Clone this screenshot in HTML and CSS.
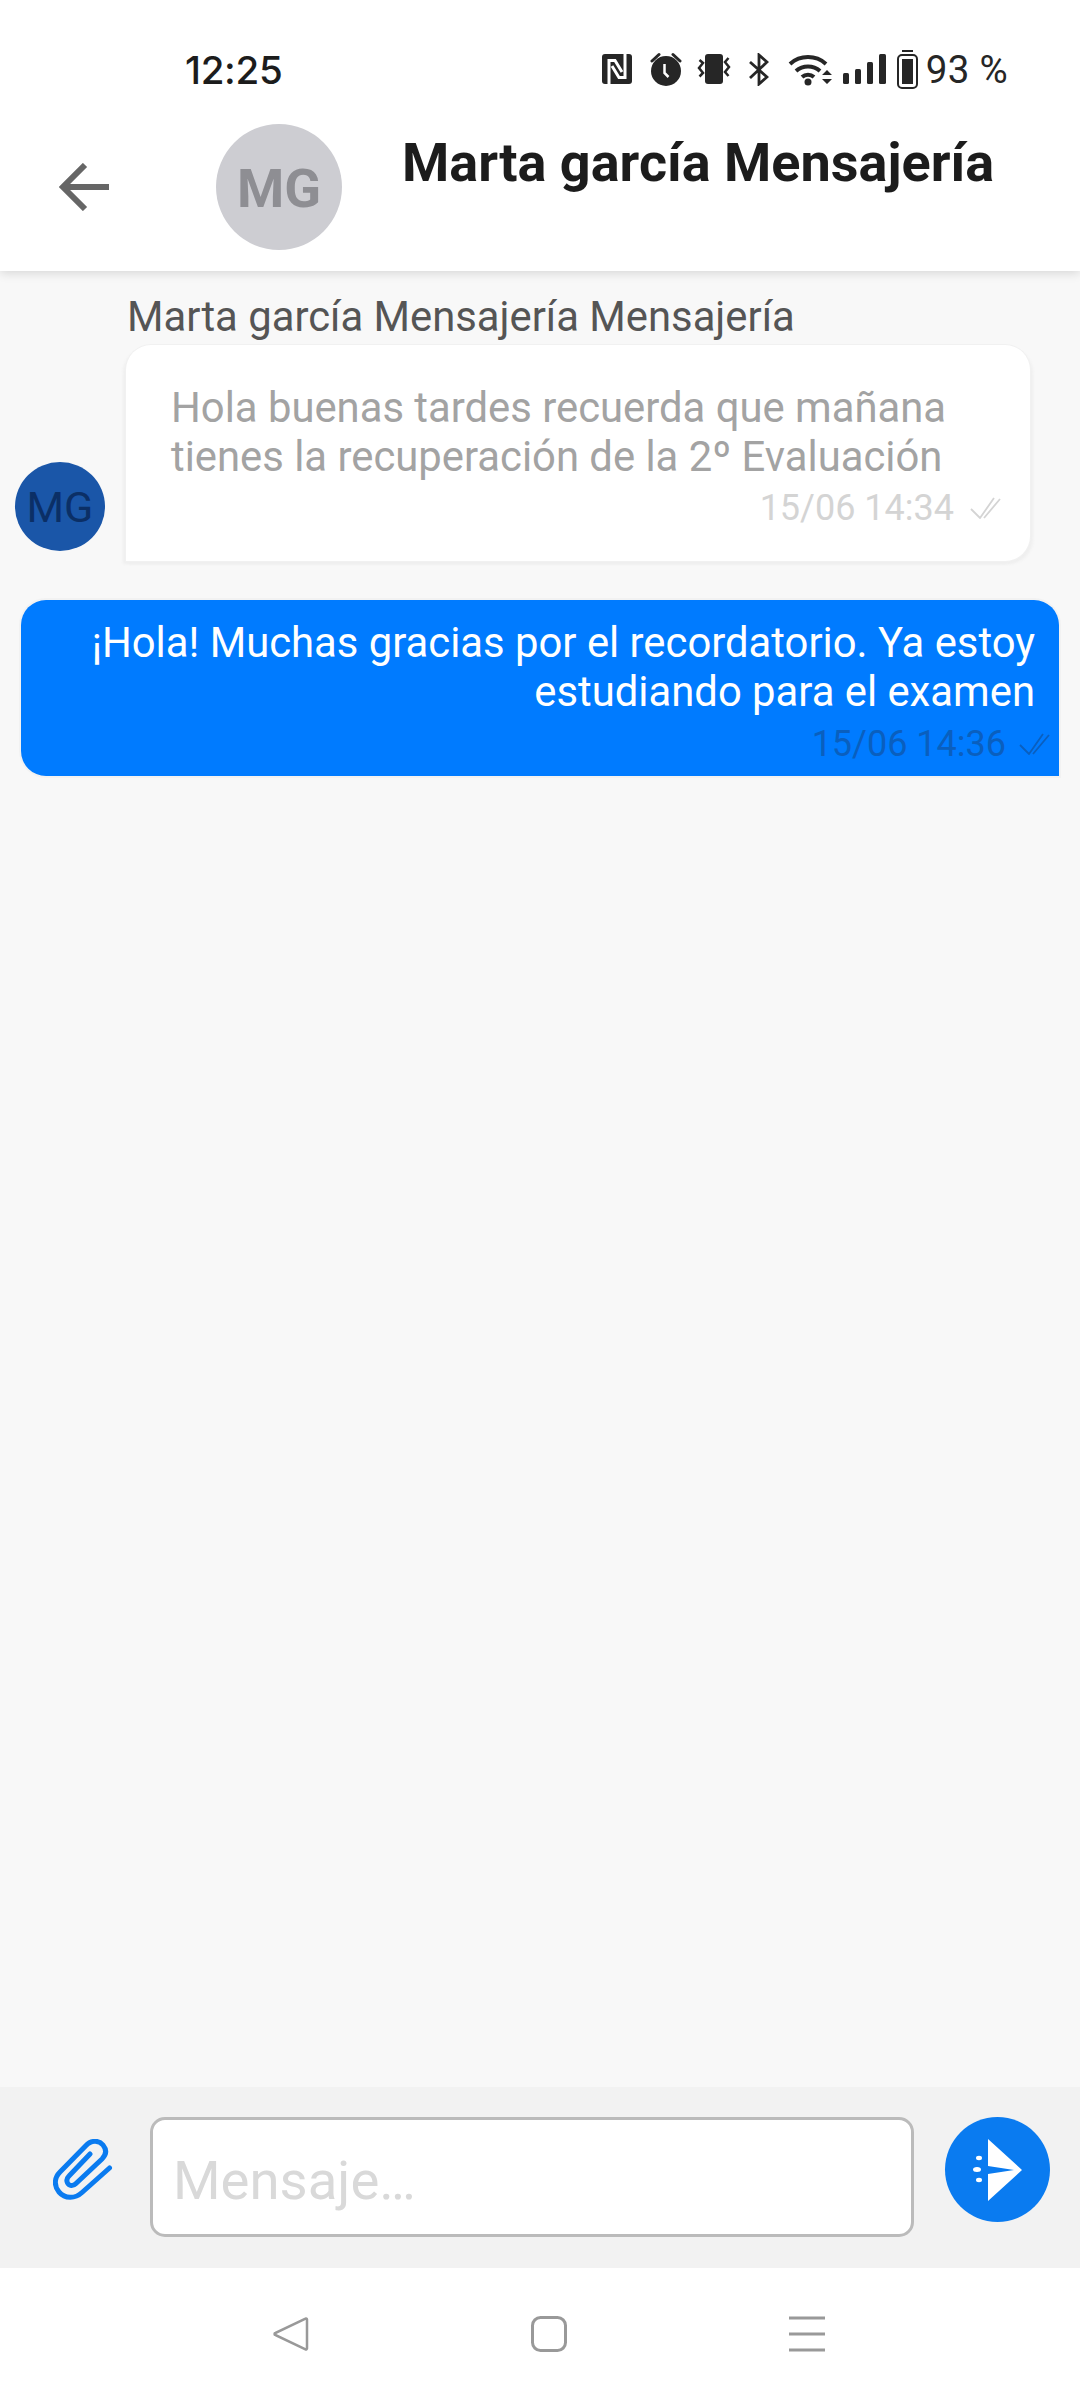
FILE: index.html
```html
<!DOCTYPE html>
<html lang="es">
<head>
<meta charset="utf-8">
<title>Mensajería</title>
<link rel="stylesheet" href="styles.css">
</head>
<body>
<div class="app">
  <header class="top">
    <div class="status">
      <span class="time">12:25</span>
      <div class="status-icons">
        <svg class="si" width="30" height="30" viewBox="0 0 30 30"><rect width="30" height="30" rx="3" fill="#262626"/><path d="M7 30V6.500h6L20 18M23 0v23.500h-6L10 12" fill="none" stroke="#fff" stroke-width="3"/></svg>
        <svg class="si si-alarm" width="32" height="34" viewBox="0 0 32 34"><circle cx="16" cy="19" r="15" fill="#262626"/><path d="M2 9l7-6.500M30 9l-7-6.500" stroke="#262626" stroke-width="3" stroke-linecap="round"/><path d="M14.500 12v9l4 4" fill="none" stroke="#fff" stroke-width="2.500"/></svg>
        <svg class="si si-vib" width="34" height="30" viewBox="0 0 34 30"><rect x="8" y="0" width="18" height="30" rx="3" fill="#262626"/><path d="M2.500 6l3.500 3-4 5 4 5-3.500 3.500M31.500 4l-3.500 4 4 5-4 5 3.500 4" fill="none" stroke="#262626" stroke-width="2.500"/></svg>
        <svg class="si si-bt" width="21" height="33" viewBox="0 0 21 33"><path d="M2 9l17 15-8 7V2l8 7L2 25" fill="none" stroke="#262626" stroke-width="2.800"/></svg>
        <svg class="si si-wifi" width="44" height="33" viewBox="0 0 44 33"><path d="M2 11a27 27 0 0 1 36 0M8 18a18 18 0 0 1 24 0M14 24a9 9 0 0 1 12 0" fill="none" stroke="#262626" stroke-width="4"/><circle cx="20" cy="29" r="3.500" fill="#262626"/><path d="M34 22l5-5 5 5zM34 26h10l-5 5z" fill="#262626"/></svg>
        <svg class="si si-sig" width="43" height="30" viewBox="0 0 43 30"><rect y="19" width="6" height="11" rx="1.500" fill="#262626"/><rect x="12" y="15" width="6" height="15" rx="1.500" fill="#262626"/><rect x="24" y="8" width="6" height="22" rx="1.500" fill="#262626"/><rect x="36" y="0" width="7" height="30" rx="1.500" fill="#262626"/></svg>
        <svg class="si si-bat" width="21" height="39" viewBox="0 0 21 39"><path d="M5 1h11" stroke="#262626" stroke-width="2"/><rect x="1" y="5" width="19" height="33" rx="4" fill="none" stroke="#262626" stroke-width="2"/><rect x="5" y="9" width="11" height="25" fill="#262626"/></svg>
        <span class="pct">93 %</span>
      </div>
    </div>
    <div class="bar">
      <svg class="back" width="50" height="48" viewBox="0 0 50 48"><path d="M50 24H4M26 2L4 24l22 22" fill="none" stroke="#666" stroke-width="6"/></svg>
      <div class="avatar-lg">MG</div>
      <h1 class="title">Marta garcía Mensajería</h1>
    </div>
  </header>

  <main class="chat">
    <div class="incoming">
      <div class="avatar-sm">MG</div>
      <div class="incoming-body">
        <div class="sender">Marta garcía Mensajería Mensajería</div>
        <div class="bubble bubble-in">
          <p class="msg">Hola buenas tardes recuerda que mañana<br>tienes la recuperación de la 2º Evaluación</p>
          <div class="meta meta-in">
            <span>15/06 14:34</span>
            <svg class="tick" width="31" height="22" viewBox="0 0 31 22"><path d="M1 12l9 9L24 1M14 21L30 2" fill="none" stroke="currentColor" stroke-width="1.800"/></svg>
          </div>
        </div>
      </div>
    </div>
    <div class="bubble bubble-out">
      <p class="msg">¡Hola! Muchas gracias por el recordatorio. Ya estoy<br>estudiando para el examen</p>
      <div class="meta meta-out">
        <span>15/06 14:36</span>
        <svg class="tick" width="31" height="22" viewBox="0 0 31 22"><path d="M1 12l9 9L24 1M14 21L30 2" fill="none" stroke="currentColor" stroke-width="1.800"/></svg>
      </div>
    </div>
  </main>

  <footer class="composer">
    <svg class="clip" width="60" height="62" viewBox="0 0 60 62"><path d="M56.500 29L29 53.500C22 60 12 60 6 53C1 47 1 39 7 33L33 6.500C38 1 46 1 50 6C54 11 53 16 49 20L23 44.500C20 47.500 16 47 14.500 44C13 41 14 39 16 37L37 15" fill="none" stroke="#0a7bf0" stroke-width="5" stroke-linecap="round"/></svg>
    <div class="field">Mensaje…</div>
    <div class="send">
      <svg width="50" height="62" viewBox="0 0 50 62"><path d="M15 0l34 31-34 31V35l26-4-26-4z" fill="#fff"/><ellipse cx="6" cy="19" rx="3" ry="2.200" fill="#fff"/><ellipse cx="4" cy="30.500" rx="4" ry="2.500" fill="#fff"/><ellipse cx="6" cy="41" rx="3" ry="2.200" fill="#fff"/></svg>
    </div>
  </footer>

  <nav class="nav">
    <svg width="36" height="36" viewBox="0 0 36 36"><path d="M34 3.500v29a1 1 0 0 1-1.500.8L2.500 19a1 1 0 0 1 0-2L32.500 2.700a1 1 0 0 1 1.500.8z" fill="none" stroke="#999" stroke-width="2.500"/></svg>
    <svg width="36" height="36" viewBox="0 0 36 36"><rect x="1.500" y="1.500" width="33" height="33" rx="8" fill="none" stroke="#999" stroke-width="3"/></svg>
    <svg width="36" height="36" viewBox="0 0 36 36"><path d="M0 2h36M0 18h36M0 34h36" stroke="#999" stroke-width="3"/></svg>
  </nav>
</div>
</body>
</html>
```
FILE: styles.css
```css
* { box-sizing: border-box; }
html, body { margin: 0; padding: 0; }
body { font-family: Roboto, "Noto Sans", sans-serif; background: #f8f8f8; }
.app { width: 1080px; height: 2400px; display: flex; flex-direction: column; overflow: hidden; }

.top { height: 271px; flex: none; background: #fff; box-shadow: 0 2px 10px rgba(0,0,0,.14); position: relative; z-index: 1; }
.status { height: 124px; display: flex; align-items: center; justify-content: space-between; padding: 14px 72px 0 185px; color: #1c1c1c; }
.time { font-size: 38.500px; font-weight: 500; font-family: Inter, Roboto, sans-serif; letter-spacing: -.3px; margin-top: 2px; }
.status-icons { display: flex; align-items: center; gap: 11px; }
.si { flex: none; display: block; }
.si-alarm { margin-left: 7px; }
.si-vib { margin-left: 4px; }
.si-bt { margin-left: 6px; }
.si-wifi { margin-left: 8px; }
.pct { font-size: 38.500px; color: #262626; margin-left: -3px; letter-spacing: .3px; }

.bar { display: flex; align-items: flex-start; height: 147px; padding: 0 0 0 59px; }
.back { margin-top: 39px; flex: none; }
.avatar-lg { width: 126px; height: 126px; margin: 0 0 0 107px; border-radius: 50%; background: #cdcdd2; color: #8e8e93; display: flex; align-items: center; justify-content: center; font-size: 54px; font-weight: 700; padding-top: 2px; flex: none; }
.title { margin: 7px 0 0 60px; font-size: 54px; font-weight: 700; line-height: 1.2; color: #1c1c1c; white-space: nowrap; }

.chat { flex: 1; display: flex; flex-direction: column; padding: 22px 21px 0 15px; background: #f8f8f8; }
.incoming { display: flex; align-items: flex-end; }
.avatar-sm { width: 90px; height: 89px; border-radius: 50%; background: #1a56a8; color: #0b2f66; display: flex; align-items: center; justify-content: center; font-size: 43px; margin-bottom: 10px; flex: none; }
.incoming-body { margin-left: 21px; display: flex; flex-direction: column; }
.sender { font-size: 41.800px; line-height: 48px; color: #555; margin-left: 1px; margin-bottom: 4px; white-space: nowrap; }
.bubble { position: relative; }
.msg { margin: 0; font-size: 41.800px; line-height: 49px; }
.bubble-in { width: 904px; height: 216px; background: #fff; border-radius: 25px; box-shadow: 0 0 0 1px #f1f1f1, -3px 3px 3px #efefef, 3px 3px 3px #efefef; padding: 38px 29px 0 45px; border-bottom-left-radius: 0; }
.bubble-in .msg { color: #a3a3a3; }
.meta { display: flex; align-items: center; justify-content: flex-end; gap: 16px; font-size: 36px; line-height: 40px; }
.tick { flex: none; }
.meta-in { color: #d4d4d4; margin-top: 7px; }
.bubble-out { margin: 39px 0 0 6px; height: 176px; background: #007bff; border-radius: 25px 25px 0 25px; box-shadow: 0 0 0 2px #f2f2f2; padding: 18px 9px 0 0; text-align: right; }
.bubble-out .msg { color: #fff; padding-right: 15px; }
.meta-out { color: #0a5fbe; margin-top: 8px; gap: 13px; }

.composer { height: 181px; flex: none; background: #f2f2f2; display: flex; align-items: flex-start; padding: 30px 30px 0 53px; }
.clip { margin-top: 22px; flex: none; }
.field { width: 764px; height: 120px; margin-left: 37px; background: #fff; border: 3px solid #bbb; border-radius: 15px; color: #d9d9d9; font-size: 54.500px; line-height: 120px; padding-left: 20px; flex: none; }
.send { width: 105px; height: 105px; margin-left: 31px; border-radius: 50%; background: #0a7bf0; display: flex; align-items: center; justify-content: center; flex: none; }

.nav { height: 132px; flex: none; background: #fff; display: flex; justify-content: flex-start; align-items: center; gap: 222px; padding: 0 0 0 273px; }
```
